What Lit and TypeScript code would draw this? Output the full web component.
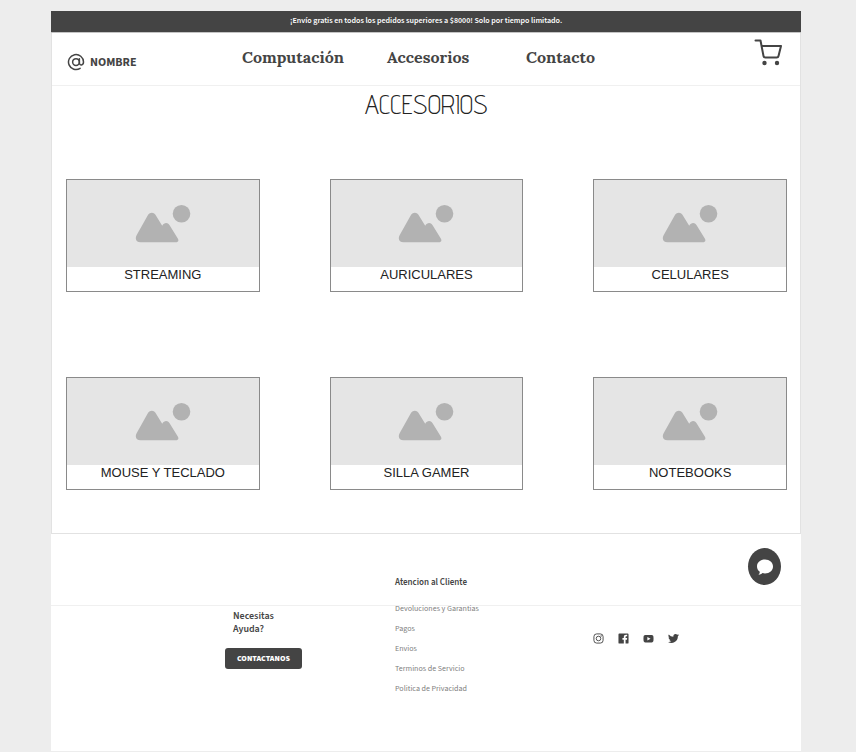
import { LitElement, html, css, svg } from "lit";
import { customElement, property } from "lit/decorators.js";

@customElement("category-card")
class CategoryCard extends LitElement {
  @property() label = "";

  static styles = css`
    :host {
      display: block;
    }
    .card {
      display: block;
      border: 1px solid #8a8a8a;
      background: #fff;
      color: #222;
      text-decoration: none;
      text-align: center;
    }
    .thumb {
      display: flex;
      justify-content: center;
      background: #e5e5e5;
      padding: 24px 0 23px;
    }
    .thumb svg {
      display: block;
      width: 56px;
      height: 40px;
    }
    .label {
      display: block;
      height: 24px;
      font: 13px/15px "Liberation Sans", Arial, sans-serif;
    }
  `;

  render() {
    return html`<a class="card" href="#">
      <span class="thumb">
        <svg viewBox="0 0 56 40" fill="#b2b2b2" aria-hidden="true">
          <circle cx="46.500" cy="9.700" r="8.800" />
          <path
            d="M1.600 31.200 12.400 12c2.200-4.200 6.600-4.200 8.800 0l6 9.800c1.800-3.200 5.200-4 7.400-.6l8.200 13.200c1.400 2.200.2 3.900-2.400 3.900H5.500c-4 0-5.900-3.200-3.900-7.100Z"
          />
        </svg>
      </span>
      <span class="label">${this.label}</span>
    </a>`;
  }
}

const categories = [
  "STREAMING",
  "AURICULARES",
  "CELULARES",
  "MOUSE Y TECLADO",
  "SILLA GAMER",
  "NOTEBOOKS",
];

const links = [
  "Devoluciones y Garantias",
  "Pagos",
  "Envios",
  "Terminos de Servicio",
  "Politica de Privacidad",
];

const socials = [
  {
    name: "Instagram",
    icon: svg`<g fill="none" stroke="currentColor" stroke-width="2"><rect x="2" y="2" width="20" height="20" rx="6"/><circle cx="12" cy="12" r="5"/></g><circle cx="17.700" cy="6.300" r="1.500"/>`,
  },
  {
    name: "Facebook",
    icon: svg`<path d="M3 1h18a2 2 0 0 1 2 2v18a2 2 0 0 1-2 2h-4.500v-8.500h3l.5-3.500h-3.500V9c0-1.200.5-1.800 1.900-1.800H20V4c-.6-.1-1.500-.2-2.600-.2-2.900 0-4.700 1.700-4.700 4.800V11h-3v3.500h3V23H3a2 2 0 0 1-2-2V3a2 2 0 0 1 2-2Z"/>`,
  },
  {
    name: "YouTube",
    icon: svg`<path fill-rule="evenodd" d="M5 4.500c4-.5 10-.5 14 0 2.500.3 3.600 1.500 3.800 4 .3 2.500.3 5.500 0 8-.2 2.500-1.300 3.700-3.800 4-4 .5-10 .5-14 0-2.500-.3-3.600-1.500-3.800-4-.3-2.500-.3-5.500 0-8 .2-2.500 1.300-3.700 3.800-4ZM9.500 8.500v8l7-4-7-4Z"/>`,
  },
  {
    name: "Twitter",
    icon: svg`<path d="M24 4.600a10 10 0 0 1-2.800.8 5 5 0 0 0 2.100-2.700 10 10 0 0 1-3.100 1.200 4.900 4.900 0 0 0-8.400 4.500A14 14 0 0 1 1.700 3.100a4.900 4.900 0 0 0 1.500 6.600 5 5 0 0 1-2.200-.6 4.900 4.900 0 0 0 4 4.900 5 5 0 0 1-2.300.1 4.900 4.900 0 0 0 4.600 3.400A9.900 9.900 0 0 1 0 19.500a14 14 0 0 0 21.500-12.400A10 10 0 0 0 24 4.600Z"/>`,
  },
];

@customElement("app-root")
class AppRoot extends LitElement {
  static styles = css`
    :host {
      display: block;
      box-sizing: border-box;
      min-height: 100vh;
      padding: 11px 55px 0 51px;
      background: #ededed;
      color: #444;
      font-family: "Source Sans Pro", "Source Sans 3", "Noto Sans CJK SC", sans-serif;
    }
    a {
      color: inherit;
      text-decoration: none;
    }
    .banner {
      margin: 0;
      padding-bottom: 2px;
      background: #444;
      color: #fff;
      border-bottom: 1px solid #c4c4c4;
      text-align: center;
      font-size: 8px;
      font-weight: 600;
      line-height: 19px;
    }
    .shop {
      background: #fff;
      border: solid #e2e2e2;
      border-width: 0 1px 1px;
    }
    .header {
      display: grid;
      grid-template-columns: 190fr 476fr 82fr;
      height: 52px;
      border-bottom: 1px solid #f0f0f0;
    }
    .brand {
      display: flex;
      align-items: center;
      gap: 5px;
      padding: 6px 0 0 15px;
      font-size: 12px;
      font-weight: 700;
    }
    .brand svg {
      width: 18px;
      height: 18px;
    }
    .nav {
      display: grid;
      grid-template-columns: 145fr 139fr 192fr;
      align-items: center;
      padding-bottom: 4px;
      font: 700 16px/22px Lora, "Liberation Serif", serif;
    }
    .cart {
      justify-self: end;
      align-self: start;
      margin: 5px 18px 0 0;
      padding: 0;
      border: 0;
      background: none;
      color: #444;
    }
    .cart svg {
      display: block;
      width: 28px;
      height: 28px;
    }
    .title {
      margin: 0;
      padding: 4px 0 61px;
      text-align: center;
      color: #222;
      font: 300 27px/28px "Advent Pro", "Terminal Dosis", Dosis, "Roboto Condensed", Roboto, sans-serif;
    }
    .grid {
      display: grid;
      grid-template-columns: repeat(3, 1fr);
      gap: 85px 70px;
      padding: 0 13px 43px 14px;
    }
    .footer {
      position: relative;
      isolation: isolate;
      display: grid;
      grid-template-columns: 174fr 170fr 197fr 209fr;
      min-height: 217px;
      background: #fff;
    }
    .rule {
      position: absolute;
      z-index: -1;
      inset: 71px 0 auto;
      margin: 0;
      border: 0;
      border-top: 1px solid #f0f0f0;
    }
    .help {
      grid-column: 2;
      padding-top: 76px;
    }
    .ask {
      width: 60px;
      margin: 0 0 9px 8px;
      font-size: 10px;
      font-weight: 600;
      line-height: 13px;
    }
    .contact {
      height: 21px;
      padding: 0 12px;
      border: 0;
      border-radius: 3px;
      background: #444;
      color: #fff;
      font: inherit;
      font-size: 8px;
      font-weight: 900;
      line-height: 21px;
    }
    .service {
      grid-column: 3;
      padding-top: 41px;
    }
    .service-title {
      margin: 0 0 8px;
      font-size: 9px;
      font-weight: 600;
      line-height: 16px;
    }
    .links {
      margin: 0;
      padding: 0;
      list-style: none;
      color: #808080;
      font-size: 8px;
      line-height: 20px;
    }
    .social {
      grid-column: 4;
      display: flex;
      align-self: start;
      gap: 14px;
      padding: 99px 0 0 1px;
    }
    .social svg {
      display: block;
      width: 11px;
      height: 11px;
    }
    .chat {
      position: absolute;
      top: 14px;
      right: 20px;
      display: grid;
      place-items: center;
      width: 33px;
      height: 37px;
      padding: 0;
      border: 0;
      border-radius: 50%;
      background: #444;
      color: #fff;
    }
    .chat svg {
      width: 18px;
      height: 18px;
    }
  `;

  render() {
    return html`
      <p class="banner">
        ¡Envío gratis en todos los pedidos superiores a $8000! Solo por tiempo
        limitado.
      </p>
      <div class="shop">
        <header class="header">
          <a class="brand" href="#">
            <svg
              viewBox="0 0 24 24"
              fill="none"
              stroke="currentColor"
              stroke-width="2"
              stroke-linecap="round"
              aria-hidden="true"
            >
              <circle cx="12" cy="12" r="4.500" />
              <path
                d="M16.500 7.500V13c0 4 5.500 4 5.500-1a10 10 0 1 0-4.500 8.400"
              />
            </svg>
            NOMBRE
          </a>
          <nav class="nav">
            <a href="#">Computación</a>
            <a href="#">Accesorios</a>
            <a href="#">Contacto</a>
          </nav>
          <button class="cart" aria-label="Carrito">
            <svg
              viewBox="0 0 28 28"
              fill="none"
              stroke="currentColor"
              stroke-width="2"
              stroke-linecap="round"
              stroke-linejoin="round"
            >
              <path d="M1.500 2.500h5l3 15.500q.3 1.500 1.800 1.500h11.400q1.500 0 1.800-1.500L27 8H7.600" />
              <g fill="currentColor" stroke="none">
                <circle cx="10.500" cy="25" r="2.200" />
                <circle cx="23" cy="25" r="2.200" />
              </g>
            </svg>
          </button>
        </header>
        <main>
          <h1 class="title">ACCESORIOS</h1>
          <div class="grid">
            ${categories.map(
              (c) => html`<category-card label=${c}></category-card>`
            )}
          </div>
        </main>
      </div>
      <footer class="footer">
        <hr class="rule" />
        <div class="help">
          <p class="ask">Necesitas Ayuda?</p>
          <button class="contact">CONTACTANOS</button>
        </div>
        <div class="service">
          <h2 class="service-title">Atencion al Cliente</h2>
          <ul class="links">
            ${links.map((l) => html`<li><a href="#">${l}</a></li>`)}
          </ul>
        </div>
        <div class="social">
          ${socials.map(
            (s) => html`<a href="#" aria-label=${s.name}
              ><svg viewBox="0 0 24 24" fill="currentColor">${s.icon}</svg></a
            >`
          )}
        </div>
        <button class="chat" aria-label="Chat">
          <svg viewBox="0 0 18 18" fill="currentColor">
            <path
              d="M9 1.500c4.600 0 8 3 8 7s-3.400 7-8 7c-.9 0-1.800-.1-2.600-.4-1 .9-2.300 1.700-4 1.800.9-.9 1.300-2 1.400-3.200C2 12.400 1 10.600 1 8.500c0-4 3.400-7 8-7Z"
            />
          </svg>
        </button>
      </footer>
    `;
  }
}
